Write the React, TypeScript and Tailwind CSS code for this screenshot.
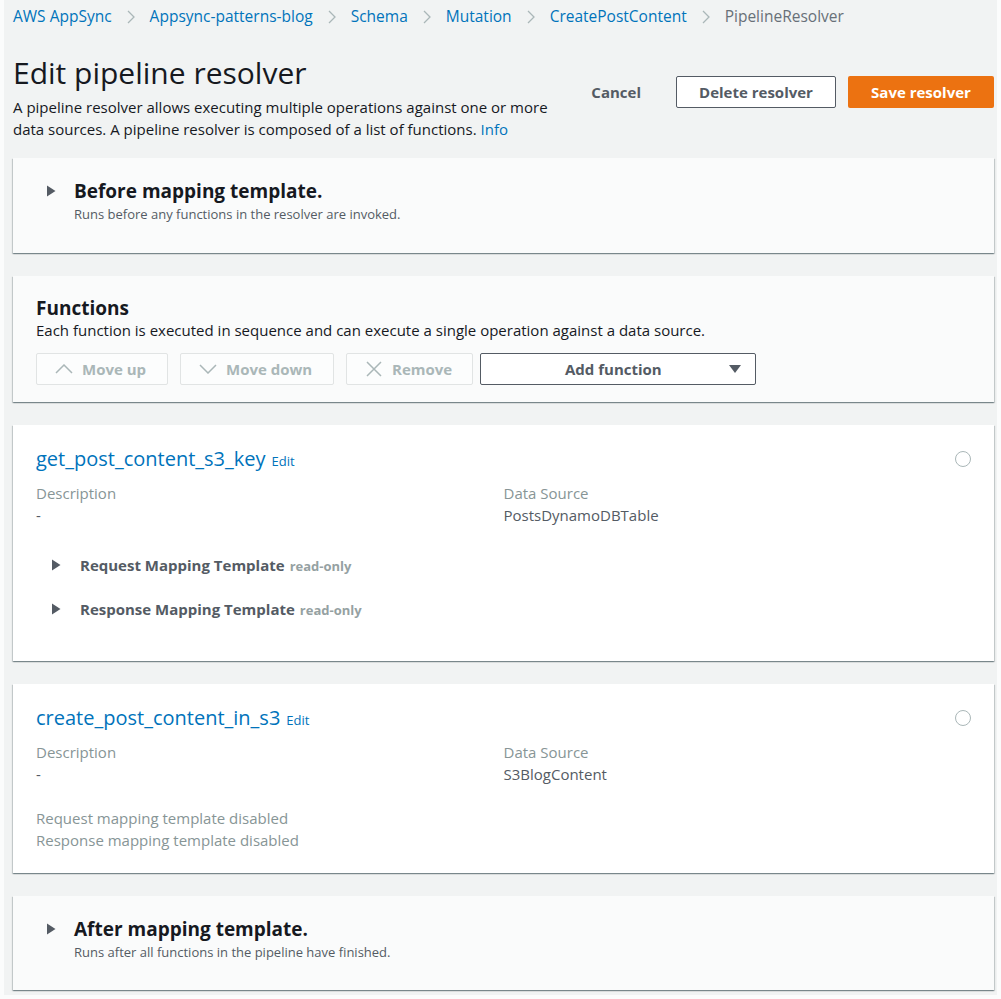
import * as React from "react";

type Crumb = { label: string; link: boolean };

const crumbs: Crumb[] = [
  { label: "AWS AppSync", link: true },
  { label: "Appsync-patterns-blog", link: true },
  { label: "Schema", link: true },
  { label: "Mutation", link: true },
  { label: "CreatePostContent", link: true },
  { label: "PipelineResolver", link: false },
];

const cardShadow =
  "shadow-[0_1px_1px_0_rgba(0,28,36,0.3),1px_1px_1px_0_rgba(0,28,36,0.15),-1px_1px_1px_0_rgba(0,28,36,0.15)]";

function Chevron() {
  return (
    <svg width="8" height="14" viewBox="0 0 8 14" className="mx-[15px]">
      <path d="M1 1l6 6-6 6" fill="none" stroke="#aab7b8" strokeWidth="1.3" />
    </svg>
  );
}

function Caret({ className = "" }: { className?: string }) {
  return (
    <svg width="10" height="12" viewBox="0 0 10 12" className={className}>
      <path d="M1 0.5l8.5 5.5-8.5 5.5z" fill="#545b64" />
    </svg>
  );
}

function Breadcrumbs() {
  return (
    <div className="flex items-center h-[34px] text-[15.5px]">
      {crumbs.map((c, i) => (
        <React.Fragment key={c.label}>
          {i > 0 && <Chevron />}
          <span className={c.link ? "text-[#0073bb]" : "text-[#687078]"}>{c.label}</span>
        </React.Fragment>
      ))}
    </div>
  );
}

function Header() {
  return (
    <div className="flex justify-between items-start mt-[21px]">
      <div>
        <h1 className="text-[30px] leading-[36px] text-[#16191f] font-normal">Edit pipeline resolver</h1>
        <p className="text-[15px] leading-[22px] text-[#16191f] mt-[5px]">
          A pipeline resolver allows executing multiple operations against one or more
          <br />
          data sources. A pipeline resolver is composed of a list of functions.{" "}
          <span className="text-[#0073bb]">Info</span>
        </p>
      </div>
      <div className="flex items-center mt-[21px]">
        <button className="text-[15px] font-bold text-[#545b64] px-[20px] mr-[15px] h-[32px]">Cancel</button>
        <button className="w-[160px] h-[32px] border border-[#545b64] rounded-[2px] bg-white text-[15px] font-bold text-[#545b64]">
          Delete resolver
        </button>
        <button className="w-[146px] h-[32px] ml-[12px] rounded-[2px] bg-[#ec7211] text-[15px] font-bold text-white">
          Save resolver
        </button>
      </div>
    </div>
  );
}

function MappingCard({ title, sub, h }: { title: string; sub: string; h: string }) {
  return (
    <div className={`bg-[#fafbfb] ${cardShadow} ${h} pt-[21px] pl-[33px]`}>
      <div className="flex items-center h-[24px]">
        <Caret className="mr-[18px]" />
        <span className="text-[19px] font-bold text-[#16191f]">{title}</span>
      </div>
      <div className="pl-[28px] text-[13px] leading-[22px] text-[#545b64]">{sub}</div>
    </div>
  );
}

function ToolButton({ label, w, icon }: { label: string; w: string; icon: React.ReactNode }) {
  return (
    <button className={`${w} h-[32px] flex items-center pl-[18px] border border-[#e1e4e4] rounded-[2px] bg-[#fcfdfd] text-[15px] font-bold text-[#aab7b8]`}>
      <span className="w-[18px] flex justify-center mr-[9px]">{icon}</span>
      {label}
    </button>
  );
}

function FunctionsCard() {
  return (
    <div className={`bg-[#fafbfb] ${cardShadow} h-[126px] pt-[20px] px-[23px]`}>
      <div className="text-[19px] leading-[24px] font-bold text-[#16191f]">Functions</div>
      <div className="text-[15px] leading-[20px] text-[#16191f]">
        Each function is executed in sequence and can execute a single operation against a data source.
      </div>
      <div className="flex mt-[13px] gap-[12px]">
        <ToolButton
          label="Move up"
          w="w-[132px]"
          icon={
            <svg width="18" height="10" viewBox="0 0 18 10">
              <path d="M1 9l8-8 8 8" fill="none" stroke="#aab7b8" strokeWidth="1.5" />
            </svg>
          }
        />
        <ToolButton
          label="Move down"
          w="w-[154px]"
          icon={
            <svg width="18" height="10" viewBox="0 0 18 10">
              <path d="M1 1l8 8 8-8" fill="none" stroke="#aab7b8" strokeWidth="1.5" />
            </svg>
          }
        />
        <ToolButton
          label="Remove"
          w="w-[127px]"
          icon={
            <svg width="16" height="16" viewBox="0 0 16 16">
              <path d="M1 1l14 14M15 1L1 15" fill="none" stroke="#aab7b8" strokeWidth="1.5" />
            </svg>
          }
        />
        <button className="w-[276px] h-[32px] ml-[-5px] flex items-center justify-between pl-[84px] pr-[14px] border border-[#545b64] rounded-[2px] bg-white text-[15px] font-bold text-[#545b64]">
          Add function
          <svg width="12" height="8" viewBox="0 0 12 8">
            <path d="M0 0h12L6 8z" fill="#545b64" />
          </svg>
        </button>
      </div>
    </div>
  );
}

function FnCard({
  name,
  source,
  h,
  children,
}: {
  name: string;
  source: string;
  h: string;
  children: React.ReactNode;
}) {
  return (
    <div className={`bg-white ${cardShadow} ${h} pt-[22px] px-[23px]`}>
      <div className="flex items-center justify-between h-[24px]">
        <div className="flex items-baseline">
          <span className="text-[20px] text-[#0073bb]">{name}</span>
          <span className="ml-[6px] text-[13px] text-[#0073bb]">Edit</span>
        </div>
        <span className="w-[16px] h-[16px] rounded-full border border-[#aab7b8] bg-white" />
      </div>
      <div className="grid grid-cols-2 mt-[11px] text-[15px] leading-[22px]">
        <div>
          <div className="text-[#879596]">Description</div>
          <div className="text-[#545b64]">-</div>
        </div>
        <div>
          <div className="text-[#879596]">Data Source</div>
          <div className="text-[#545b64]">{source}</div>
        </div>
      </div>
      {children}
    </div>
  );
}

function ReadOnlyRow({ label }: { label: string }) {
  return (
    <div className="flex items-center h-[44px] pl-[15px]">
      <Caret className="mr-[19px]" />
      <div className="flex items-baseline">
        <span className="text-[15px] font-bold text-[#545b64]">{label}</span>
        <span className="ml-[5px] text-[13px] font-bold text-[#95a1a2]">read-only</span>
      </div>
    </div>
  );
}

export default function App() {
  return (
    <div className="bg-[#fbfcfc] w-[1001px] h-[999px] font-['Open_Sans',sans-serif]">
      <div className="bg-[#f1f3f3] ml-[4px] w-[993px] h-[995px] pl-[9px] pr-[3px]">
        <Breadcrumbs />
        <Header />
        <div className="flex flex-col gap-[23px] mt-[18px]">
          <MappingCard
            title="Before mapping template."
            sub="Runs before any functions in the resolver are invoked."
            h="h-[95px]"
          />
          <FunctionsCard />
          <FnCard name="get_post_content_s3_key" source="PostsDynamoDBTable" h="h-[236px]">
            <div className="mt-[17px]">
              <ReadOnlyRow label="Request Mapping Template" />
              <ReadOnlyRow label="Response Mapping Template" />
            </div>
          </FnCard>
          <FnCard name="create_post_content_in_s3" source="S3BlogContent" h="h-[189px]">
            <div className="mt-[22px] text-[15px] leading-[22px] text-[#879596]">
              <div>Request mapping template disabled</div>
              <div>Response mapping template disabled</div>
            </div>
          </FnCard>
          <MappingCard
            title="After mapping template."
            sub="Runs after all functions in the pipeline have finished."
            h="h-[94px]"
          />
        </div>
      </div>
    </div>
  );
}
